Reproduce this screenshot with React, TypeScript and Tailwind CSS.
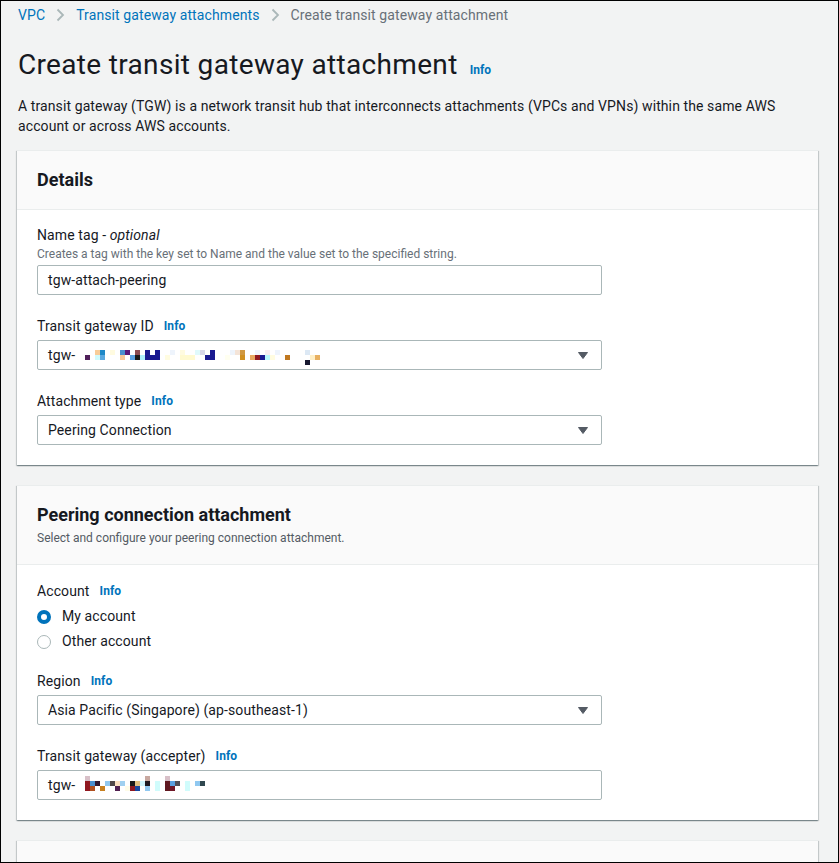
import React from "react";

type Px = [number, number, string];

const tgwIdPixels: Px[] = [
  [15, 9, "#f8cc98"], [20, 9, "#1e88c8"], [30, 9, "#fffbe0"], [40, 9, "#4a90d0"], [45, 9, "#5a1a7a"],
  [55, 9, "#8a4a50"], [65, 9, "#1a1a90"], [75, 9, "#1a1a90"], [90, 9, "#eef4fc"], [100, 9, "#fffbe0"],
  [115, 9, "#e0fafc"], [120, 9, "#d8d8e8"], [130, 9, "#1a1a90"], [150, 9, "#eef4fc"], [155, 9, "#f4e4d8"],
  [160, 9, "#d09840"], [175, 9, "#f0f4fc"], [185, 9, "#f8eef0"], [195, 9, "#eef4fc"], [225, 9, "#dce8f4"],
  [5, 14, "#50205a"], [15, 14, "#d0fafc"], [20, 14, "#5aa8e0"], [40, 14, "#f8c898"], [50, 14, "#5aa0e0"],
  [55, 14, "#181818"], [60, 14, "#b0f0fc"], [65, 14, "#1a1a90"], [70, 14, "#1a1a90"], [75, 14, "#1a1a90"],
  [85, 14, "#fffce0"], [100, 14, "#fffad0"], [105, 14, "#fffad0"], [110, 14, "#fffad0"], [125, 14, "#1a1a90"],
  [130, 14, "#1a1a90"], [145, 14, "#fffff0"], [160, 14, "#d09020"], [170, 14, "#e8a860"], [175, 14, "#901820"],
  [180, 14, "#1a1a90"], [185, 14, "#b8f8fc"], [190, 14, "#fffce0"], [205, 14, "#c07820"], [230, 14, "#fff0c8"],
  [235, 14, "#e8b060"], [225, 19, "#181830"],
];

const accepterPixels: Px[] = [
  [5, 5, "#d8c0c8"], [65, 5, "#c8a8a0"], [85, 5, "#d8c0c8"],
  [5, 10, "#901820"], [10, 10, "#4a90d0"], [15, 10, "#301830"], [25, 10, "#90c8f0"], [30, 10, "#504848"],
  [35, 10, "#fce0c0"], [40, 10, "#a0d0f0"], [50, 10, "#181818"], [55, 10, "#e0c080"], [60, 10, "#d0f4fc"],
  [65, 10, "#201820"], [75, 10, "#d0fcfc"], [85, 10, "#601820"], [90, 10, "#5aa0e0"], [95, 10, "#505058"],
  [105, 10, "#d0fcfc"], [115, 10, "#90c8f0"], [120, 10, "#304850"],
  [5, 15, "#901820"], [10, 15, "#b05020"], [20, 15, "#c88020"], [35, 15, "#502050"], [45, 15, "#fffce8"],
  [50, 15, "#901820"], [55, 15, "#1848a0"], [65, 15, "#90c8f0"], [75, 15, "#d0fcfc"], [85, 15, "#601820"],
  [90, 15, "#701828"], [105, 15, "#d0fcfc"],
];

function Pixels({ data }: { data: Px[] }) {
  return (
    <svg className="absolute left-[42px] top-0" width="250" height="28" viewBox="0 0 250 28">
      {data.map(([x, y, c], i) => (
        <rect key={i} x={x} y={y} width="5" height="5" fill={c} />
      ))}
    </svg>
  );
}

function Info() {
  return <span className="text-[12px] font-bold leading-[22px] text-[#0073bb]">Info</span>;
}

function Chevron() {
  return (
    <svg width="9" height="14" viewBox="0 0 9 14" className="shrink-0">
      <polyline points="1.5,1.5 7,7 1.5,12.5" fill="none" stroke="#aab7b8" strokeWidth="1.8" />
    </svg>
  );
}

function Caret() {
  return (
    <svg width="10" height="7" viewBox="0 0 10 7" className="shrink-0">
      <polygon points="0.5,0.5 9.5,0.5 5,6.5" fill="#545b64" stroke="#545b64" strokeWidth="1" strokeLinejoin="round" />
    </svg>
  );
}

function Label({ text, info = true }: { text: React.ReactNode; info?: boolean }) {
  return (
    <div className="flex items-center gap-[10px] text-[14px] leading-[22px] tracking-[0.1px] text-[#16191f]">
      <span>{text}</span>
      {info && <Info />}
    </div>
  );
}

function Box({
  children,
  select = false,
}: {
  children: React.ReactNode;
  select?: boolean;
}) {
  return (
    <div className="relative mt-[3px] flex h-[30px] w-[565px] items-center justify-between rounded-[2px] border border-[#aab7b8] bg-white pl-[10px] pr-[13px] text-[14px] tracking-[0.1px] text-[#16191f]">
      {children}
      {select && <Caret />}
    </div>
  );
}

function Card({
  title,
  desc,
  bodyTop = "pt-[15px]",
  children,
}: {
  title: string;
  desc?: string;
  bodyTop?: string;
  children?: React.ReactNode;
}) {
  return (
    <div className="w-[801px] border-t border-[#eaeded] bg-white shadow-[0_1px_1px_0_rgba(0,28,36,0.3),1px_1px_1px_0_rgba(0,28,36,0.15),-1px_1px_1px_0_rgba(0,28,36,0.15)]">
      <div className={`border-b border-[#eaeded] bg-[#fafafa] px-[20px] pt-[18px] ${desc ? "pb-[17px]" : "pb-[18px]"}`}>
        <div className="text-[18px] font-bold leading-[22px] text-[#16191f]">{title}</div>
        {desc && <div className="mt-[3px] text-[12px] leading-[18px] text-[#545b64]">{desc}</div>}
      </div>
      {children && <div className={`px-[20px] pb-[20px] ${bodyTop}`}>{children}</div>}
    </div>
  );
}

function Radio({ checked, label }: { checked?: boolean; label: string }) {
  return (
    <div className="flex h-[25px] items-center gap-[11px] text-[14px] tracking-[0.1px] text-[#16191f]">
      {checked ? (
        <span className="box-border h-[14px] w-[14px] rounded-full border-[4px] border-[#0073bb] bg-white" />
      ) : (
        <span className="box-border h-[14px] w-[14px] rounded-full border-[1.5px] border-[#aab7b8] bg-white" />
      )}
      <span>{label}</span>
    </div>
  );
}

export default function App() {
  return (
    <div className="h-[863px] w-[839px] overflow-hidden border border-black bg-[#f2f3f3] pl-[16px] font-['Roboto','Liberation_Sans',sans-serif] text-[#16191f]">
      <div className="mt-[4px] flex h-[20px] items-center gap-[11px] pl-[1px] text-[14px] leading-[20px] tracking-[0.1px]">
        <span className="text-[#0073bb]">VPC</span>
        <Chevron />
        <span className="text-[#0073bb]">Transit gateway attachments</span>
        <Chevron />
        <span className="text-[#687078]">Create transit gateway attachment</span>
      </div>

      <div className="mt-[22px] flex items-baseline gap-[12px] pl-[1px]">
        <h1 className="text-[28px] font-normal leading-[36px] tracking-[0.33px] text-[#16191f]">
          Create transit gateway attachment
        </h1>
        <Info />
      </div>

      <p className="mt-[13px] w-[800px] pl-[1px] text-[14px] leading-[20px] tracking-[0.1px] text-[#16191f]">
        A transit gateway (TGW) is a network transit hub that interconnects attachments (VPCs and VPNs) within the same AWS
        account or across AWS accounts.
      </p>

      <div className="mt-[14px] flex flex-col gap-[20px]">
        <Card title="Details" bodyTop="pt-[14px]">
          <Label
            info={false}
            text={
              <>
                Name tag - <i>optional</i>
              </>
            }
          />
          <div className="text-[12px] leading-[16px] text-[#687078]">
            Creates a tag with the key set to Name and the value set to the specified string.
          </div>
          <Box>
            <span>tgw-attach-peering</span>
          </Box>

          <div className="mt-[20px]">
            <Label text="Transit gateway ID" />
            <Box select>
              <span>tgw-</span>
              <Pixels data={tgwIdPixels} />
            </Box>
          </div>

          <div className="mt-[20px]">
            <Label text="Attachment type" />
            <Box select>
              <span>Peering Connection</span>
            </Box>
          </div>
        </Card>

        <Card title="Peering connection attachment" desc="Select and configure your peering connection attachment.">
          <Label text="Account" />
          <div className="mt-[2px] flex flex-col">
            <Radio checked label="My account" />
            <Radio label="Other account" />
          </div>

          <div className="mt-[16px]">
            <Label text="Region" />
            <Box select>
              <span>Asia Pacific (Singapore) (ap-southeast-1)</span>
            </Box>
          </div>

          <div className="mt-[20px]">
            <Label text="Transit gateway (accepter)" />
            <Box>
              <span>tgw-</span>
              <Pixels data={accepterPixels} />
            </Box>
          </div>
        </Card>

        <Card title="" />
      </div>
    </div>
  );
}
